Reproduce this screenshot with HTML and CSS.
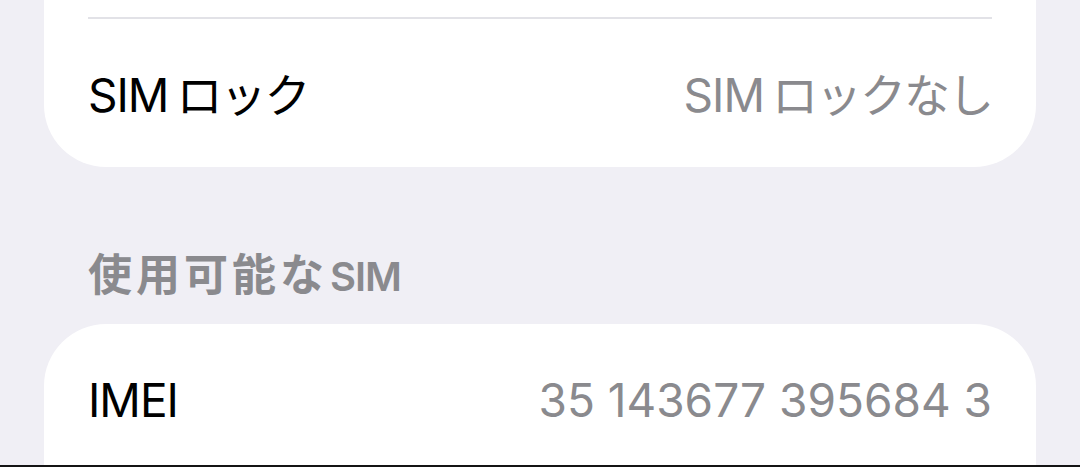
FILE: index.html
```html
<!DOCTYPE html>
<html lang="ja">
<head>
<meta charset="utf-8">
<title>SIM</title>
<link rel="stylesheet" href="styles.css">
</head>
<body>
<div class="screen">
  <section class="group group--tail">
    <div class="row-prev"></div>
    <div class="row">
      <span class="label"><span class="lat">SIM</span><span class="jp">ロック</span></span>
      <span class="value"><span class="lat">SIM</span><span class="jp">ロックなし</span></span>
    </div>
  </section>

  <h2 class="section-title"><span class="jp">使用可能な</span><span class="lat">SIM</span></h2>

  <section class="group group--head">
    <div class="row">
      <span class="label"><span class="lat">IMEI</span></span>
      <span class="value">35 143677 395684 3</span>
    </div>
  </section>
</div>
</body>
</html>
```

FILE: styles.css
```css
html, body {
  margin: 0;
  padding: 0;
}

body {
  background: #f0eff5;
  font-family: "Inter", "Noto Sans CJK JP", sans-serif;
  -webkit-font-smoothing: antialiased;
}

.screen {
  box-sizing: border-box;
  height: 467px;
  overflow: hidden;
  padding: 0 44px;
  display: flex;
  flex-direction: column;
  border-bottom: 2px solid #141414;
}

.group {
  background: #ffffff;
  padding: 0 44px;
  flex-shrink: 0;
}

.group--tail {
  border-radius: 0 0 62px 62px;
}

.group--head {
  border-radius: 62px 62px 0 0;
  flex: 1;
}

/* lower edge of the row scrolled out above */
.row-prev {
  height: 17px;
  border-bottom: 2px solid #e2e2e7;
}

.row {
  box-sizing: border-box;
  height: 148px;
  padding-top: 3px;
  display: flex;
  align-items: center;
  justify-content: space-between;
  font-size: 46px;
  line-height: 56px;
}

.row .lat {
  letter-spacing: -1px;
}

.row .jp {
  margin-left: 8px;
  letter-spacing: -2px;
}

.label {
  color: #000000;
}

.value {
  color: #8a8a8e;
  white-space: nowrap;
}

.section-title {
  margin: 84px 0 23px;
  padding-left: 44px;
  font-size: 44px;
  line-height: 48px;
  font-weight: 600;
  color: #8a8a8e;
}

.section-title .jp {
  letter-spacing: 4px;
}

.section-title .lat {
  margin-left: 2px;
  font-size: 40px;
  letter-spacing: -1px;
}
```
